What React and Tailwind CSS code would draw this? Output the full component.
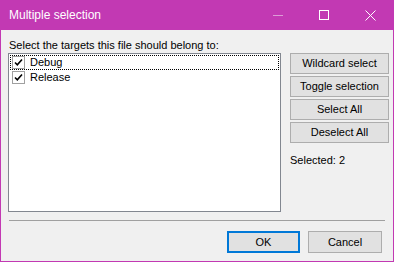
import React from "react";

const font = { fontFamily: '"Liberation Sans", Arial, sans-serif' };

function Check() {
  return (
    <span className="w-[13px] h-[13px] border border-[#a0a0a0] bg-white flex items-center justify-center shrink-0">
      <svg width="9" height="9" viewBox="0 0 9 9">
        <path d="M1 4.5 L3.3 6.8 L8 1.5" stroke="#000" strokeWidth="1.6" fill="none" />
      </svg>
    </span>
  );
}

function SideBtn({ children }) {
  return (
    <div className="h-[21px] w-[99px] border border-[#adadad] bg-[#e1e1e1] flex items-center justify-center text-[11px] text-black leading-none">
      {children}
    </div>
  );
}

export default function App() {
  return (
    <div
      className="w-[394px] h-[262px] bg-[#c239b3] flex flex-col px-[1px] pb-[1px] overflow-hidden"
      style={font}
    >
      <div className="h-[30px] flex items-center shrink-0 relative">
        <span className="ml-[8px] text-white text-[12px] leading-none">Multiple selection</span>
        <div className="ml-auto flex items-center h-full">
          <div className="w-[46px] h-full flex items-center justify-center">
            <span className="w-[10px] h-[1px] bg-[#dc9cd6]" />
          </div>
          <div className="w-[46px] h-full flex items-center justify-center">
            <span className="w-[10px] h-[10px] border border-white" />
          </div>
          <div className="w-[46px] h-full flex items-center justify-center">
            <svg width="11" height="11" viewBox="0 0 11 11">
              <path d="M0.5 0.5 L10.5 10.5 M10.5 0.5 L0.5 10.5" stroke="#fff" strokeWidth="1" />
            </svg>
          </div>
        </div>
      </div>
      <div className="flex-1 bg-[#f0f0f0] flex flex-col pl-[7px]">
        <div className="mt-[8px] h-[15px] text-[11px] leading-[15px] text-black pl-[1px] whitespace-nowrap">
          Select the targets this file should belong to:
        </div>
        <div className="flex">
          <div className="w-[273px] h-[159px] border border-[#828790] bg-white p-[1px] flex flex-col">
            <div className="h-[15px] border border-dotted border-black flex items-center pl-[1px] overflow-hidden">
              <Check />
              <span className="ml-[5px] text-[11px] leading-[13px] text-black">Debug</span>
            </div>
            <div className="h-[15px] flex items-center pl-[2px] overflow-hidden">
              <Check />
              <span className="ml-[5px] text-[11px] leading-[13px] text-black">Release</span>
            </div>
          </div>
          <div className="ml-[9px] flex flex-col gap-[2px]">
            <SideBtn>Wildcard select</SideBtn>
            <SideBtn>Toggle selection</SideBtn>
            <SideBtn>Select All</SideBtn>
            <SideBtn>Deselect All</SideBtn>
            <div className="mt-[8px] text-[11px] leading-[15px] text-black">Selected: 2</div>
          </div>
        </div>
        <div className="mt-[8px] ml-[1px] w-[376px] h-[1px] bg-[#a0a0a0]" />
        <div className="mt-[10px] flex justify-end pr-[11px] gap-[8px]">
          <div className="w-[73px] h-[22px] border-2 border-[#0078d7] bg-[#e1e1e1] flex items-center justify-center text-[11px] leading-none text-black">
            OK
          </div>
          <div className="w-[74px] h-[22px] border border-[#adadad] bg-[#e1e1e1] flex items-center justify-center text-[11px] leading-none text-black">
            Cancel
          </div>
        </div>
      </div>
    </div>
  );
}
